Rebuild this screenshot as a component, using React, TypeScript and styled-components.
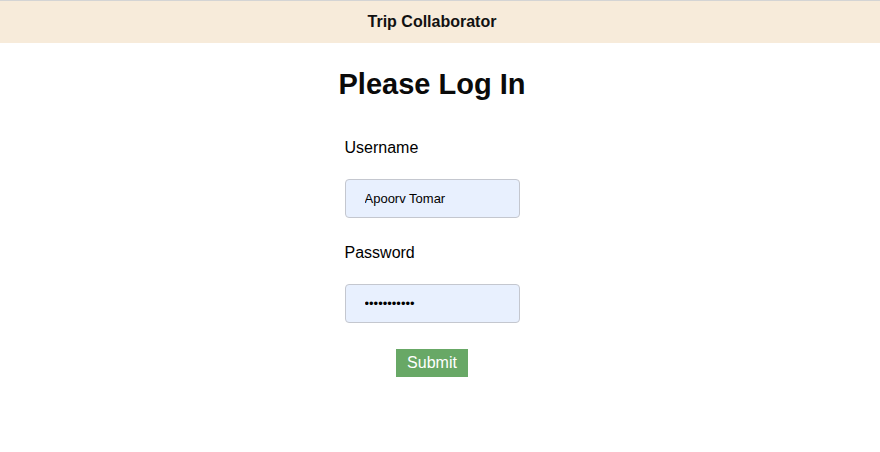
import React from "react";
import styled, { createGlobalStyle } from "styled-components";

const Global = createGlobalStyle`
  html, body { margin: 0; padding: 0; background: #fff; }
  body { font-family: "Liberation Sans", Arial, sans-serif; color: #000; }
`;

const Header = styled.header`
  height: 43px;
  background: #f7ebda;
  border-top: 1px solid #d4d4d4;
  box-sizing: border-box;
  display: flex;
  align-items: center;
  justify-content: center;
  padding-right: 16px;
`;

const Brand = styled.h2`
  margin: 0;
  font-size: 16px;
  font-weight: 700;
  color: #111;
`;

const Main = styled.main`
  display: flex;
  flex-direction: column;
  align-items: center;
  padding-right: 16px;
`;

const Title = styled.h1`
  margin: 24px 0 0;
  font-size: 29px;
  font-weight: 700;
  line-height: 34px;
  color: #0a0a0a;
`;

const Form = styled.form`
  width: 175px;
  margin-top: 36px;
  display: flex;
  flex-direction: column;
`;

const Label = styled.label`
  font-size: 16px;
  line-height: 20px;
  height: 20px;
  padding-top: 1px;
  margin-bottom: 21px;
`;

const Input = styled.input`
  box-sizing: border-box;
  width: 175px;
  height: 39px;
  background: #e8f0fe;
  border: 1px solid #c4c7cf;
  border-radius: 4px;
  padding: 0 0 0 19px;
  font-family: "Liberation Sans", Arial, sans-serif;
  font-size: 13px;
  color: #000;
  margin-bottom: 24px;
  outline: none;
`;

const Actions = styled.div`
  display: flex;
  justify-content: center;
  margin-top: 2px;
`;

const Submit = styled.button`
  width: 72px;
  height: 28px;
  background: #68a866;
  color: #fff;
  border: none;
  font-family: "Liberation Sans", Arial, sans-serif;
  font-size: 16px;
  padding: 0;
`;

export default function App() {
  return (
    <>
      <Global />
      <Header>
        <Brand>Trip Collaborator</Brand>
      </Header>
      <Main>
        <Title>Please Log In</Title>
        <Form onSubmit={(e) => e.preventDefault()}>
          <Label>Username</Label>
          <Input type="text" defaultValue="Apoorv Tomar" />
          <Label>Password</Label>
          <Input type="password" defaultValue="apoorvtomar" />
          <Actions>
            <Submit type="submit">Submit</Submit>
          </Actions>
        </Form>
      </Main>
    </>
  );
}
